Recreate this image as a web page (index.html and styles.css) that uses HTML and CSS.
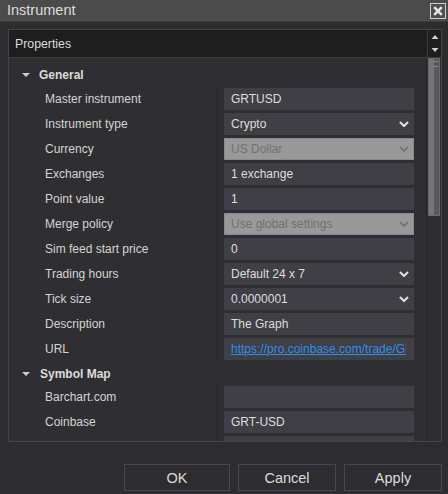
FILE: index.html
```html
<!DOCTYPE html>
<html>
<head>
<meta charset="utf-8">
<link rel="stylesheet" href="styles.css">
</head>
<body>
<div class="window">
  <div class="titlebar">
    <span class="title">Instrument</span>
    <div class="close">
      <svg width="16" height="16" viewBox="0 0 16 16"><rect x="0.5" y="0.5" width="15" height="15" fill="#4f4f4f" stroke="#cfcfcf"/><path d="M4.2 4.2 L11.8 11.8 M11.8 4.2 L4.2 11.8" stroke="#e6e6e6" stroke-width="2.6"/></svg>
    </div>
  </div>
  <div class="content">
    <div class="panel">
      <div class="panel-header">
        <span class="panel-title">Properties</span>
        <div class="spin">
          <svg width="8" height="4" viewBox="0 0 8 4"><path d="M0.5 4 L4 0 L7.5 4 Z" fill="#d0d0d0"/></svg>
          <svg width="8" height="4" viewBox="0 0 8 4"><path d="M0.5 0 L4 4 L7.5 0 Z" fill="#d0d0d0"/></svg>
        </div>
      </div>
      <div class="panel-body">
        <div class="grid">
          <div class="group-row"><svg class="tri" width="8" height="4" viewBox="0 0 8 4"><path d="M0 0 L8 0 L4 4 Z" fill="#cfcfcf"/></svg><span>General</span></div>
          <div class="row"><div class="label">Master instrument</div><div class="cell"><div class="box">GRTUSD</div></div></div>
          <div class="row"><div class="label">Instrument type</div><div class="cell"><div class="box combo">Crypto<svg class="chev" width="10" height="6" viewBox="0 0 10 6"><path d="M1 1 L5 5 L9 1" fill="none" stroke="#dcdcdc" stroke-width="2.2"/></svg></div></div></div>
          <div class="row"><div class="label">Currency</div><div class="cell"><div class="box combo disabled">US Dollar<svg class="chev" width="10" height="6" viewBox="0 0 10 6"><path d="M1 1 L5 5 L9 1" fill="none" stroke="#767676" stroke-width="2"/></svg></div></div></div>
          <div class="row"><div class="label">Exchanges</div><div class="cell"><div class="box">1 exchange</div></div></div>
          <div class="row"><div class="label">Point value</div><div class="cell"><div class="box">1</div></div></div>
          <div class="row"><div class="label">Merge policy</div><div class="cell"><div class="box combo disabled">Use global settings<svg class="chev" width="10" height="6" viewBox="0 0 10 6"><path d="M1 1 L5 5 L9 1" fill="none" stroke="#767676" stroke-width="2"/></svg></div></div></div>
          <div class="row"><div class="label">Sim feed start price</div><div class="cell"><div class="box">0</div></div></div>
          <div class="row"><div class="label">Trading hours</div><div class="cell"><div class="box combo">Default 24 x 7<svg class="chev" width="10" height="6" viewBox="0 0 10 6"><path d="M1 1 L5 5 L9 1" fill="none" stroke="#dcdcdc" stroke-width="2.2"/></svg></div></div></div>
          <div class="row"><div class="label">Tick size</div><div class="cell"><div class="box combo">0.0000001<svg class="chev" width="10" height="6" viewBox="0 0 10 6"><path d="M1 1 L5 5 L9 1" fill="none" stroke="#dcdcdc" stroke-width="2.2"/></svg></div></div></div>
          <div class="row"><div class="label">Description</div><div class="cell"><div class="box">The Graph</div></div></div>
          <div class="row"><div class="label">URL</div><div class="cell"><div class="box url"><span>https://pro.coinbase.com/trade/GRT-USD</span></div></div></div>
          <div class="group-row short"><svg class="tri" width="8" height="4" viewBox="0 0 8 4"><path d="M0 0 L8 0 L4 4 Z" fill="#cfcfcf"/></svg><span class="sym">Symbol Map</span></div>
          <div class="row"><div class="label">Barchart.com</div><div class="cell"><div class="box"></div></div></div>
          <div class="row"><div class="label">Coinbase</div><div class="cell"><div class="box">GRT-USD</div></div></div>
          <div class="row"><div class="label"></div><div class="cell"><div class="box"></div></div></div>
        </div>
        <div class="scrollbar"><div class="thumb"><div class="grip"></div></div></div>
      </div>
    </div>
  </div>
  <div class="footer">
    <button class="btn btn-ok">OK</button>
    <button class="btn">Cancel</button>
    <button class="btn">Apply</button>
  </div>
</div>
</body>
</html>
```
FILE: styles.css
```css
html, body {
  margin: 0;
  padding: 0;
}
body {
  background: #2d2d2f;
  font-family: "Liberation Sans", Arial, sans-serif;
  color: #d6d6d6;
}
.window {
  width: 448px;
  height: 494px;
  overflow: hidden;
  display: flex;
  flex-direction: column;
}
.titlebar {
  height: 21px;
  background: #4b4b4b;
  border-bottom: 1px solid #3b3b3b;
  display: flex;
  align-items: center;
  justify-content: space-between;
  padding: 0 2px 0 7px;
  flex: none;
}
.title {
  font-size: 14.5px;
  color: #dedede;
  line-height: 21px;
}
.close {
  width: 16px;
  height: 16px;
  display: flex;
}
.content {
  padding: 7px 6px 0 8px;
  flex: none;
}
.panel {
  height: 411px;
  border: 1px solid #464648;
  display: flex;
  flex-direction: column;
  background: #2f2f32;
}
.panel-header {
  height: 27px;
  background: #1e1e1e;
  border-bottom: 1px solid #3c3c3e;
  display: flex;
  align-items: center;
  flex: none;
}
.panel-title {
  flex: 1;
  padding-left: 6px;
  font-size: 12.3px;
  color: #dcdcdc;
}
.spin {
  width: 14px;
  height: 27px;
  border-left: 1px solid #3a3a3a;
  display: flex;
  flex-direction: column;
  align-items: center;
  justify-content: space-between;
  padding: 5px 0 5px 0;
  box-sizing: border-box;
}
.panel-body {
  flex: 1;
  display: flex;
  min-height: 0;
}
.grid {
  width: 417px;
  padding-top: 4px;
  overflow: hidden;
  background: #2f2f32;
}
.group-row {
  height: 25px;
  display: flex;
  align-items: center;
  font-weight: bold;
  font-size: 12px;
  color: #dcdcdc;
}
.group-row.short {
  height: 23px;
}
.group-row .tri {
  margin-left: 13px;
  margin-right: 9px;
  margin-top: 1px;
}
.group-row .sym {
  margin-left: 1px;
}
.row {
  height: 25px;
  display: grid;
  grid-template-columns: 207px 1fr;
  font-size: 12px;
}
.label {
  padding-left: 36px;
  line-height: 22px;
  margin-top: 1px;
  color: #d4d4d4;
  white-space: nowrap;
}
.cell {
  border-left: 1px solid #29292b;
  padding-left: 7px;
  padding-top: 1px;
}
.box {
  width: 190px;
  height: 22px;
  box-sizing: border-box;
  background: #3f3f45;
  color: #dedede;
  line-height: 22px;
  padding: 0 8px 0 7px;
  position: relative;
  white-space: nowrap;
  overflow: hidden;
}
.combo .chev {
  position: absolute;
  right: 5px;
  top: 8px;
}
.disabled {
  background: #999999;
  color: #717171;
  border: 1px solid #8a8a8a;
  line-height: 20px;
  padding-left: 6px;
}
.disabled .chev {
  right: 4px;
  top: 7px;
}
.url span {
  display: block;
  overflow: hidden;
  color: #2f8fe8;
  text-decoration: underline;
}
.scrollbar {
  width: 14px;
  border-left: 1px solid #262628;
  background: #2e2e30;
  position: relative;
}
.thumb {
  margin-left: 1px;
  width: 12px;
  height: 158px;
  box-sizing: border-box;
  border: 1px solid #6a6a6a;
  background: linear-gradient(to right, #767676 0, #767676 45%, #595959 45%, #595959 100%);
  position: relative;
}
.grip {
  position: absolute;
  right: 1px;
  top: 2px;
  width: 5px;
  height: 4px;
  border-top: 1px solid #8a8a8a;
  border-bottom: 1px solid #8a8a8a;
}
.footer {
  display: flex;
  justify-content: flex-end;
  gap: 8px;
  padding: 22px 6px 0 0;
}
.btn {
  width: 98px;
  height: 27px;
  background: #2d2d2f;
  border: 1px solid #48484a;
  color: #dcdcdc;
  font-family: "Liberation Sans", Arial, sans-serif;
  font-size: 14.5px;
  padding: 0;
}
.btn-ok {
  width: 106px;
}
```
